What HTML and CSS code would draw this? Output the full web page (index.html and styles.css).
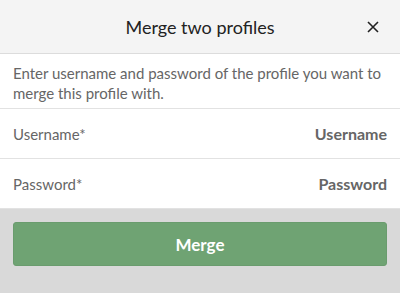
FILE: index.html
```html
<!DOCTYPE html>
<html lang="en">
<head>
    <meta charset="UTF-8">
    <meta name="viewport" content="width=device-width, initial-scale=1.0">
    <title>Merge two profiles</title>
    <link rel="stylesheet" href="styles.css">
</head>
<body>
    <!-- HEADER -->
    <div class="header">
        <span class="title">Merge two profiles</span>
        <button class="close" aria-label="Close">
            <svg width="12" height="12" viewBox="0 0 12 12">
                <path d="M1 1 L11 11 M11 1 L1 11" stroke="#222" stroke-width="1.6" fill="none"/>
            </svg>
        </button>
    </div>

    <!-- TEXTO -->
    <div class="intro">
        Enter username and password of the profile you want to merge this profile with.
    </div>

    <!-- CAMPOS -->
    <div class="field">
        <label for="username">Username*</label>
        <input id="username" type="text" placeholder="Username">
    </div>
    <div class="field">
        <label for="password">Password*</label>
        <input id="password" type="password" placeholder="Password">
    </div>

    <!-- RODAPÉ -->
    <div class="footer">
        <button class="merge">Merge</button>
    </div>
</body>
</html>
```

FILE: styles.css
```css
/* GERAL */
body {
    margin: 0;
    padding: 0;
    font-family: Lato, "Noto Sans", sans-serif;
    background-color: #d9d9d9;
    height: 100vh;
    display: flex;
    flex-direction: column;
}

/* HEADER */
.header {
    position: relative;
    height: 53px;
    background-color: #f4f4f4;
    border-bottom: 1px solid #dcdcdc;
    display: flex;
    justify-content: center;
    align-items: center;
}

.title {
    font-size: 18px;
    color: #222;
}

.close {
    position: absolute;
    right: 21px;
    top: 21px;
    background: none;
    border: none;
    padding: 0;
    width: 12px;
    height: 12px;
    display: flex;
    cursor: pointer;
}

/* TEXTO */
.intro {
    background-color: white;
    padding: 9px 13px 5px;
    font-size: 15px;
    line-height: 20px;
    color: #666;
    border-bottom: 1px solid #e2e2e2;
}

/* CAMPOS */
.field {
    background-color: white;
    height: 49px;
    padding: 0 13px;
    display: flex;
    align-items: center;
    justify-content: space-between;
    border-bottom: 1px solid #e2e2e2;
}

.field:last-of-type {
    border-bottom: none;
}

.field label {
    font-size: 15px;
    color: #666;
}

.field input {
    border: none;
    outline: none;
    text-align: right;
    font-family: inherit;
    font-size: 16px;
    font-weight: bold;
    color: #666;
    width: 200px;
    padding: 0;
}

.field input::placeholder {
    color: #666;
    opacity: 1;
}

/* RODAPÉ */
.footer {
    flex: 1;
    background-color: #d9d9d9;
    padding: 13px 13px;
}

.merge {
    width: 100%;
    height: 44px;
    background-color: #6fa373;
    border: 1px solid #6a9c6e;
    border-radius: 3px;
    color: white;
    font-family: inherit;
    font-size: 17px;
    font-weight: bold;
    cursor: pointer;
}
```
